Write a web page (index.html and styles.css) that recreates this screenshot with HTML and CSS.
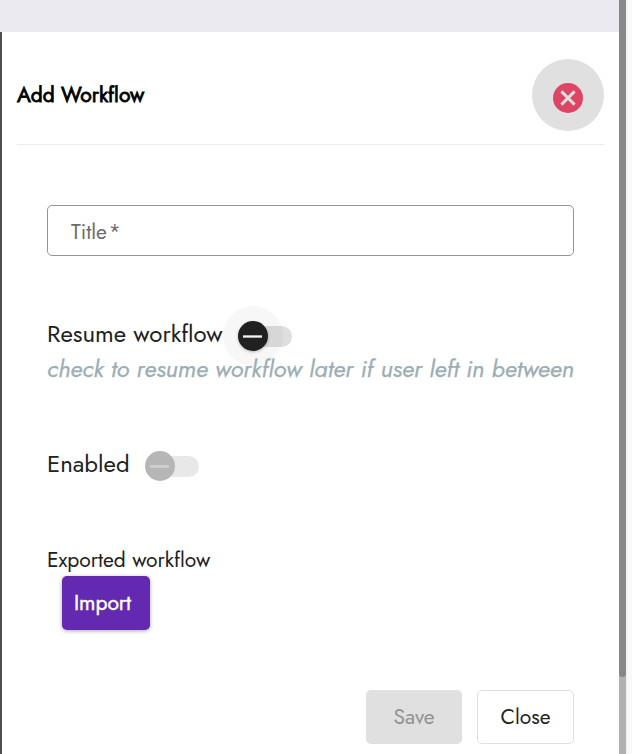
FILE: index.html
```
<!DOCTYPE html>
<html lang="en">
<head>
<meta charset="utf-8">
<title>Add Workflow</title>
<link rel="stylesheet" href="styles.css">
</head>
<body>
<div class="page">
  <div class="main">
    <div class="topbar"></div>
    <div class="dialog">
      <header class="header">
        <h1 class="heading"><span>Add Workflow</span></h1>
        <button class="dismiss" aria-label="Close dialog">
          <svg width="30" height="30" viewBox="0 0 30 30"><circle cx="15" cy="15" r="15" fill="#de4463"/><path d="M8.4 8.4 21.6 21.6M21.6 8.4 8.4 21.6" stroke="#e0e0e0" stroke-width="2.9"/></svg>
        </button>
      </header>
      <form class="form">
        <div class="field"><span class="field-label">Title<span class="star">*</span></span></div>
        <div class="row resume">
          <span class="label label-resume">Resume workflow</span>
          <span class="switch focused"><span class="thumb"></span></span>
        </div>
        <p class="hint"><span>check to resume workflow later if user left in between</span></p>
        <div class="row enabled">
          <span class="label label-enabled">Enabled</span>
          <span class="switch disabled"><span class="thumb"></span></span>
        </div>
        <div class="exported"><span>Exported workflow</span></div>
        <button type="button" class="btn import"><span>Import</span></button>
        <div class="actions">
          <button type="button" class="btn save" disabled><span>Save</span></button>
          <button type="button" class="btn close"><span>Close</span></button>
        </div>
      </form>
    </div>
  </div>
  <div class="scrollbar"><div class="scroll-thumb"></div></div>
  <div class="gutter"></div>
</div>
</body>
</html>
```
FILE: styles.css
```
* { box-sizing: border-box; }
body { margin: 0; font-family: Jost, Lato, sans-serif; color: #212121; background: #fff; }
.page { display: grid; grid-template-columns: 619px 7px 6px; height: 754px; overflow: hidden; }
.main { display: flex; flex-direction: column; }
.topbar { height: 32px; background: #ebeaf0; }
.dialog { flex: 1; border-left: 2px solid #505052; padding: 0 15px; background: #fff; }
.header { height: 113px; border-bottom: 1px solid #ececec; display: flex; align-items: center; justify-content: space-between; padding-top: 14px; }
.heading { margin: 0; font-size: 21px; line-height: 30px; font-weight: 400; color: #000; -webkit-text-stroke: 0.8px #000; white-space: nowrap; }
.dismiss { width: 72px; height: 72px; border: 0; border-radius: 50%; background: #e0e0e0; padding: 6px 0 0; display: flex; align-items: center; justify-content: center; }
.form { padding: 60px 30px 0; }
.field { height: 51px; border: 1px solid #949494; border-radius: 5px; padding: 2px 23px 0; display: flex; align-items: center; font-size: 21px; color: #6b6b6b; }
.star { margin-left: 1.5px; }
.row { display: flex; align-items: center; height: 32px; font-size: 24px; line-height: 32px; white-space: nowrap; }
.resume { margin-top: 62px; }
.label-resume { width: 191px; }
.label-enabled { width: 98px; }
.switch { position: relative; width: 54px; height: 21px; border-radius: 11px; background: linear-gradient(90deg, transparent 10px, #dedede 10px); margin-top: 5px; }
.thumb { position: absolute; left: 0; top: -5px; width: 30px; height: 30px; border-radius: 50%; background: #202020; box-shadow: 0 1px 3px #0004; }
.thumb::after { content: ""; position: absolute; left: 5px; top: 14px; width: 19px; height: 3px; background: linear-gradient(#aaa 1px, #f4f4f4 1px, #f4f4f4 2px, #aaa 2px); }
.focused::before { content: ""; position: absolute; left: -15px; top: -20px; width: 60px; height: 60px; border-radius: 50%; background: rgba(0,0,0,.03); }
.disabled { background: linear-gradient(90deg, transparent 10px, #e8e8e8 10px); }
.disabled .thumb { background: #b6b6b6; box-shadow: none; }
.disabled .thumb::after { background: #cdcdcd; }
.hint { position: relative; margin: 2px 0 0; height: 34px; line-height: 34px; font-size: 24px; font-style: italic; color: #9badb5; -webkit-text-stroke: 0.25px #9badb5; white-space: nowrap; }
.enabled { margin-top: 62px; }
.exported { margin-top: 65px; height: 31px; line-height: 31px; font-size: 21px; white-space: nowrap; }
.btn { height: 54px; border: 0; border-radius: 5px; padding: 0 0 1px; font-family: inherit; font-size: 21px; line-height: 30px; color: #212121; }
.import { display: block; margin: 0 0 0 15px; width: 88px; padding-right: 7px; background: #6329b0; color: #fff; -webkit-text-stroke: 0.4px #fff; box-shadow: 0 1px 4px #0005; }
.actions { display: flex; justify-content: flex-end; gap: 15px; margin-top: 60px; }
.save { width: 96px; background: #e0e0e0; color: #929292; }
.close { width: 97px; background: #fff; border: 1px solid #e0e0e0; }
.scrollbar { background: #b2b0b1; }
.scroll-thumb { height: 677px; background: #888; border-radius: 0 0 3px 3px; }
.gutter { background: linear-gradient(90deg, #ededed, #f8f8f8 2px); }
```
